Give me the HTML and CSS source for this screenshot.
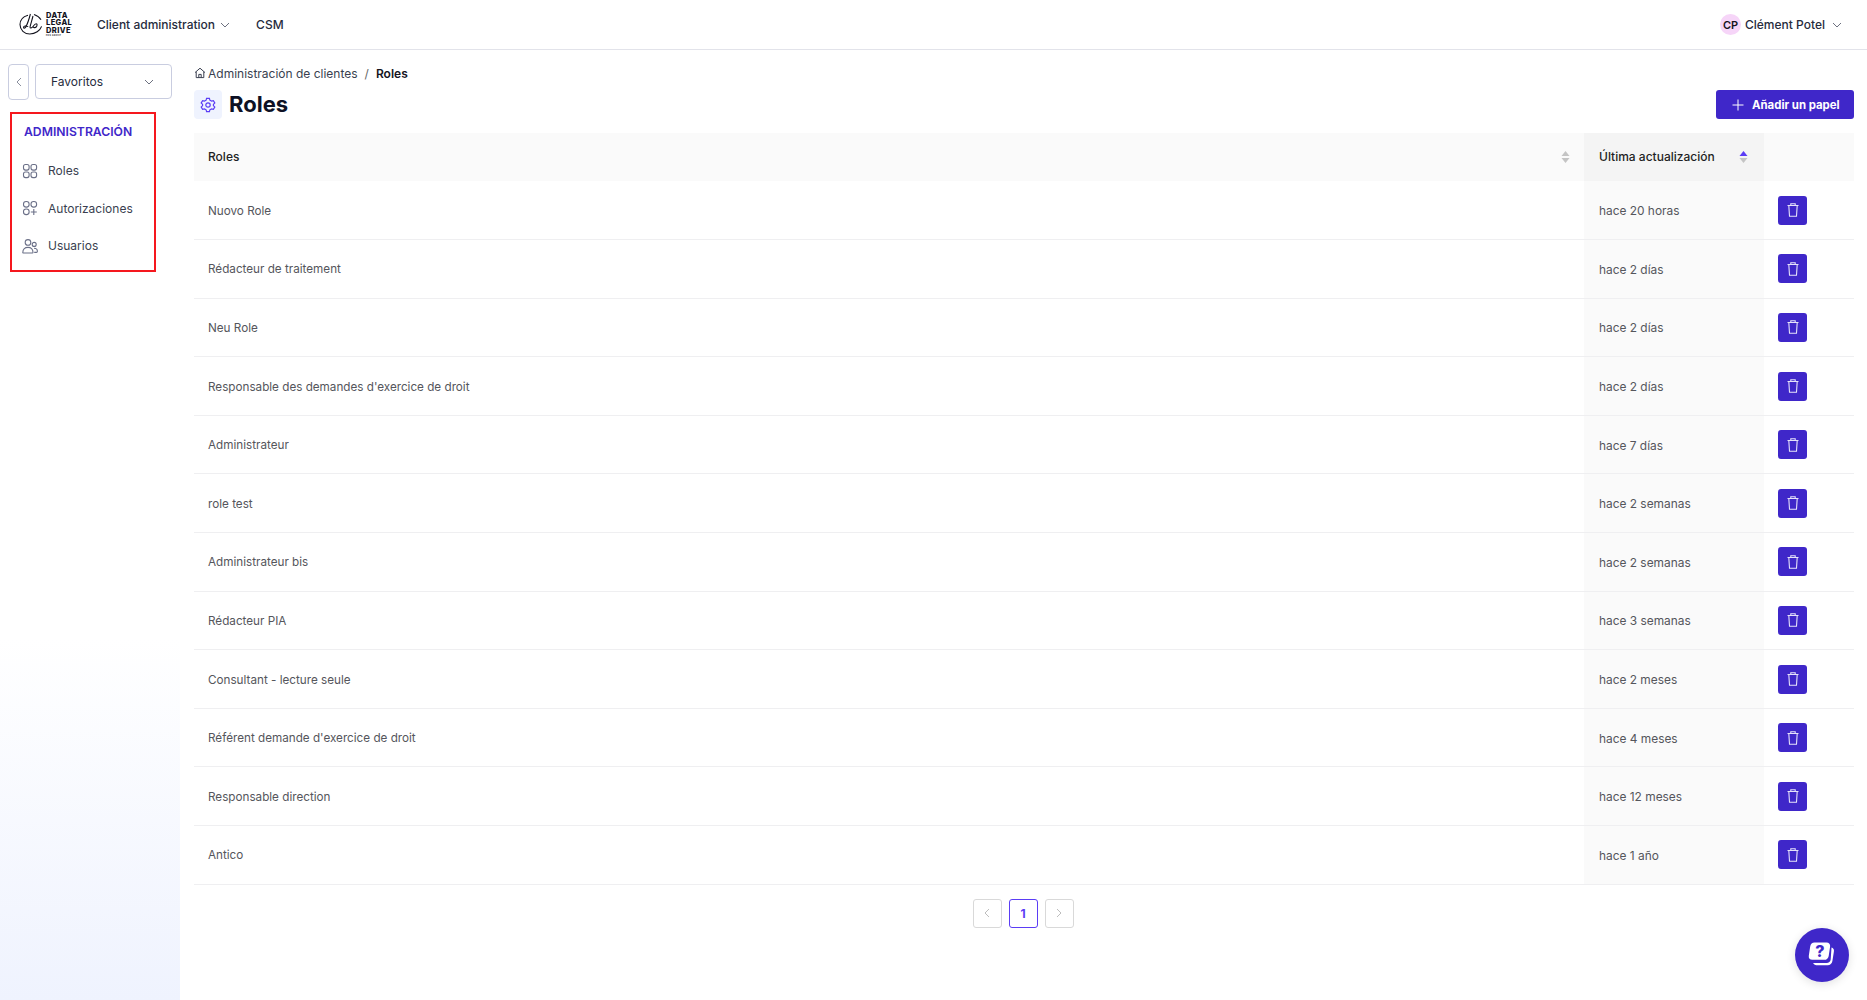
FILE: index.html
```html
<!DOCTYPE html>
<html lang="es">
<head>
    <meta charset="UTF-8">
    <title>Roles</title>
    <link rel="stylesheet" href="styles.css">
</head>
<body>
    <!-- Top bar -->
    <header class="topbar">
        <div class="logo">
            <svg class="logo-mark" width="24" height="24" viewBox="0 0 24 24" fill="none" stroke="#14141e" stroke-width="1.1">
                <path d="M9 2.200C4.600 3.400 1 6.800 1 11.600c0 5.400 4.400 9.400 9.800 9.400 5.600 0 10.200-3.400 11.800-7.600"/>
                <path d="M15 1.600c3 1 5.600 2.800 7 5.200"/>
                <path d="M11.400 1c-1.200 4.600-3 10-4.600 13-.8 1.600-2.400 1.400-2.200 0 .2-1.200 2.600-1.400 4.600-.6"/>
                <path d="M14 3c-1 4-2.400 8.200-3 11 0 1.400 1.400 1.200 2.400.2 1-1.200 2.400-3.400 3.800-3.400 1.200 0 1 2.200 0 3.200-1 1-2.600.8-2.800-.2"/>
            </svg>
            <div class="logo-text">
                <span>DATA</span>
                <span>LEGAL</span>
                <span>DRIVE</span>
                <small>EDS GROUP</small>
            </div>
        </div>
        <nav class="topnav">
            <a class="topnav-item">Client administration
                <svg class="chev" width="10" height="10" viewBox="0 0 10 10"><path d="M1 3l4 4 4-4"/></svg>
            </a>
            <a class="topnav-item">CSM</a>
        </nav>
        <div class="user">
            <span class="avatar">CP</span>
            <span>Clément Potel</span>
            <svg class="chev" width="10" height="10" viewBox="0 0 10 10"><path d="M1 3l4 4 4-4"/></svg>
        </div>
    </header>

    <div class="layout">
        <!-- Sidebar -->
        <aside class="sidebar">
            <div class="side-top">
                <button class="collapse">
                    <svg width="8" height="10" viewBox="0 0 8 10" fill="none" stroke="#8a8f9e"><path d="M6 1L2 5l4 4"/></svg>
                </button>
                <button class="favs">
                    <span>Favoritos</span>
                    <svg class="chev" width="10" height="10" viewBox="0 0 10 10"><path d="M1 3l4 4 4-4"/></svg>
                </button>
            </div>
            <div class="side-menu">
                <h3>ADMINISTRACIÓN</h3>
                <a class="side-item">
                    <svg width="16" height="16" viewBox="0 0 16 16" fill="none" stroke="#6b7088" stroke-width="1.1">
                        <rect x="1.500" y="1.500" width="5.600" height="5.600" rx="2"/>
                        <rect x="9" y="1.500" width="5.600" height="5.600" rx="2"/>
                        <rect x="1.500" y="9" width="5.600" height="5.600" rx="2"/>
                        <rect x="9" y="9" width="5.600" height="5.600" rx="2"/>
                    </svg>
                    Roles
                </a>
                <a class="side-item">
                    <svg width="16" height="16" viewBox="0 0 16 16" fill="none" stroke="#6b7088" stroke-width="1.1">
                        <rect x="1.500" y="1.500" width="5.600" height="5.600" rx="2.600"/>
                        <rect x="9" y="1.500" width="5.600" height="5.600" rx="2.600"/>
                        <rect x="1.500" y="9" width="5.600" height="5.600" rx="2.600"/>
                        <path d="M11.800 9v6M8.800 12h6"/>
                    </svg>
                    Autorizaciones
                </a>
                <a class="side-item">
                    <svg width="16" height="16" viewBox="0 0 16 16" fill="none" stroke="#6b7088" stroke-width="1.1">
                        <circle cx="6" cy="4.400" r="2.800"/>
                        <circle cx="12.200" cy="6.400" r="2"/>
                        <path d="M.8 14.400c0-3.600 2.200-5 5.200-5s5 1.600 5 5c0 .4-.2.6-.6.6H1.400c-.4 0-.6-.2-.6-.6z"/>
                        <path d="M12 10.200c2 0 3.400 1 3.400 3 0 .8-.4 1.200-1 1.200h-2.200"/>
                    </svg>
                    Usuarios
                </a>
            </div>
        </aside>

        <!-- Main content -->
        <main class="content">
            <div class="breadcrumb">
                <svg width="12" height="12" viewBox="0 0 12 12" fill="none" stroke="#3a3f50"><path d="M1 5.600L6 1.200l5 4.400M2.200 4.800v5.800h7.600V4.800M4.800 10.600V7.400h2.400v3.200"/></svg>
                <span class="crumb">Administración de clientes</span>
                <span class="crumb-sep">/</span>
                <b>Roles</b>
            </div>
            <div class="page-head">
                <div class="page-title">
                    <span class="title-icon">
                        <svg width="16" height="16" viewBox="0 0 16 16" fill="none" stroke="#5b3df5" stroke-width="1.200">
                            <path d="M6.600 1.300h2.800l.5 1.900 1.600.9 1.900-.5 1.400 2.400-1.400 1.400v1.200l1.400 1.400-1.400 2.400-1.900-.5-1.600.9-.5 1.900H6.600l-.5-1.900-1.600-.9-1.900.5L1.200 10l1.400-1.400V7.400L1.200 6l1.400-2.400 1.900.5 1.600-.9z"/>
                            <circle cx="8" cy="8" r="2.200"/>
                        </svg>
                    </span>
                    <h1>Roles</h1>
                </div>
                <button class="add-btn">
                    <svg width="12" height="12" viewBox="0 0 12 12" fill="none" stroke="#fff"><path d="M6 .5v11M.5 6h11"/></svg>
                    Añadir un papel
                </button>
            </div>

            <table class="roles">
                <thead>
                    <tr>
                        <th>
                            <div class="th-in">Roles
                                <svg width="9" height="14" viewBox="0 0 9 14"><path d="M4.500 1l4 5H.5z" fill="#c4c4c4"/><path d="M4.500 13l-4-5h8z" fill="#c4c4c4"/></svg>
                            </div>
                        </th>
                        <th class="col-date">
                            <div class="th-in">Última actualización
                                <svg width="9" height="14" viewBox="0 0 9 14"><path d="M4.500 1l4 5H.5z" fill="#5b3df5"/><path d="M4.500 13l-4-5h8z" fill="#c4c4c4"/></svg>
                            </div>
                        </th>
                        <th class="col-act"></th>
                    </tr>
                </thead>
                <tbody id="rows"></tbody>
            </table>

            <div class="pager">
                <button class="page-btn">
                    <svg width="8" height="10" viewBox="0 0 8 10" fill="none" stroke="#bdbdbd"><path d="M6 1L2 5l4 4"/></svg>
                </button>
                <button class="page-btn current">1</button>
                <button class="page-btn">
                    <svg width="8" height="10" viewBox="0 0 8 10" fill="none" stroke="#bdbdbd"><path d="M2 1l4 4-4 4"/></svg>
                </button>
            </div>
        </main>
    </div>

    <button class="help">
        <svg width="30" height="30" viewBox="0 0 30 30">
            <path d="M24.500 7.500c1.800.6 2.800 2 2.400 4l-1.500 9.500c-.4 2.600-2.200 4.200-4.800 4.200H9.500c-1.700 0-2.800-.8-3.300-2.200h13.400c2.200 0 3.800-1.300 4.100-3.500z" fill="#fff"/>
            <path d="M7.500 2.500h12c2.500 0 4 1.700 3.600 4.100l-1.400 9.300c-.4 2.400-2 3.900-4.400 3.900h-12c-2.400 0-3.900-1.700-3.500-4.100l1.400-9.300C3.600 4 5.200 2.500 7.500 2.500z" fill="#fff"/>
            <text x="13" y="17" class="help-q">?</text>
        </svg>
    </button>

    <script>
        let roles = [
            ["Nuovo Role", "hace 20 horas"],
            ["Rédacteur de traitement", "hace 2 días"],
            ["Neu Role", "hace 2 días"],
            ["Responsable des demandes d'exercice de droit", "hace 2 días"],
            ["Administrateur", "hace 7 días"],
            ["role test", "hace 2 semanas"],
            ["Administrateur bis", "hace 2 semanas"],
            ["Rédacteur PIA", "hace 3 semanas"],
            ["Consultant - lecture seule", "hace 2 meses"],
            ["Référent demande d'exercice de droit", "hace 4 meses"],
            ["Responsable direction", "hace 12 meses"],
            ["Antico", "hace 1 año"]
        ];

        let trash = '<svg width="16" height="16" viewBox="0 0 16 16" fill="none" stroke="#e6e3fa" stroke-width="1.100"><path d="M2.500 3.500h11M5.800 3.500V1.700h4.400v1.800M3.800 3.500l.7 10.800h7l.7-10.800"/></svg>';

        document.getElementById("rows").innerHTML = roles.map(function (r) {
            return `<tr><td>${r[0]}</td><td class="col-date">${r[1]}</td><td class="col-act"><button class="del">${trash}</button></td></tr>`;
        }).join("");
    </script>
</body>
</html>
```

FILE: styles.css
```css
/* Global */
* {
    box-sizing: border-box;
}

html, body {
    height: 100%;
}

body {
    margin: 0;
    font-family: "Inter", "Liberation Sans", sans-serif;
    font-size: 12px;
    color: #262b3d;
    background: #fff;
    overflow: hidden;
}

button {
    font-family: inherit;
    cursor: pointer;
}

.chev {
    fill: none;
    stroke: #5c6172;
    stroke-width: 0.9;
}

/* Top bar */
.topbar {
    display: flex;
    align-items: center;
    height: 50px;
    padding: 0 25px 0 19px;
    border-bottom: 1px solid #e2e3ea;
}

.logo {
    display: flex;
    align-items: center;
    gap: 3px;
    width: 78px;
}

.logo-text {
    display: flex;
    flex-direction: column;
    font-size: 7.500px;
    font-weight: 800;
    line-height: 7.500px;
    color: #14141e;
    letter-spacing: 0.4px;
}

.logo-text small {
    font-size: 2px;
    line-height: 3px;
    font-weight: 700;
}

.topnav {
    display: flex;
    align-items: center;
    gap: 26px;
}

.topnav-item {
    display: flex;
    align-items: center;
    gap: 5px;
    font-weight: 500;
}

.user {
    display: flex;
    align-items: center;
    gap: 4px;
    margin-left: auto;
    font-weight: 500;
}

.user .chev {
    margin-left: 3px;
}

.avatar {
    display: flex;
    align-items: center;
    justify-content: center;
    width: 21px;
    height: 21px;
    border-radius: 50%;
    background: #f6d5f8;
    color: #14141e;
    font-size: 11px;
    font-weight: 600;
}

/* Layout */
.layout {
    display: flex;
    height: 950px;
}

.sidebar {
    flex: 0 0 180px;
    padding: 14px 8px 0;
    background: linear-gradient(to bottom, #fff 62%, #eff3fe 100%);
}

.side-top {
    display: flex;
    gap: 6px;
}

.collapse {
    display: flex;
    align-items: center;
    justify-content: center;
    width: 21px;
    height: 36px;
    padding: 0;
    background: #fff;
    border: 1px solid #c9cde0;
    border-radius: 4px;
}

.favs {
    display: flex;
    align-items: center;
    justify-content: space-between;
    width: 137px;
    height: 35px;
    padding: 0 17px 0 15px;
    background: #fff;
    border: 1px solid #c9cde0;
    border-radius: 4px;
    color: #262b3d;
    font-size: 12px;
}

.side-menu {
    width: 146px;
    height: 160px;
    margin: 12px 0 0 2px;
    padding: 0 0 0 12px;
    border: 2px solid #f5181e;
}

.side-menu h3 {
    margin: 0 0 12px;
    padding-top: 10px;
    font-size: 12.200px;
    line-height: 16px;
    font-weight: 600;
    color: #3f27c9;
}

.side-item {
    display: flex;
    align-items: center;
    gap: 10px;
    height: 37.500px;
    margin-left: -2px;
    color: #3a3f50;
}

/* Main content */
.content {
    flex: 1;
    padding: 15px 13px 0 14px;
}

.breadcrumb {
    display: flex;
    align-items: center;
    height: 16px;
    color: #3a3f50;
}

.breadcrumb svg {
    margin-right: 2px;
}

.crumb-sep {
    margin: 0 7px;
    color: #666;
}

.breadcrumb b {
    font-weight: 600;
    color: #14141e;
}

.page-head {
    display: flex;
    align-items: center;
    justify-content: space-between;
    margin-top: 9px;
}

.page-title {
    display: flex;
    align-items: center;
    gap: 7px;
}

.title-icon {
    display: flex;
    align-items: center;
    justify-content: center;
    width: 28px;
    height: 29px;
    background: #eff3fe;
    border-radius: 4px;
}

.page-title h1 {
    margin: 0;
    font-size: 22px;
    line-height: 27px;
    font-weight: 700;
    color: #0d1124;
}

.add-btn {
    display: flex;
    align-items: center;
    gap: 8px;
    width: 138px;
    height: 29px;
    padding: 0 0 0 16px;
    background: #3f27c9;
    border: none;
    border-radius: 3px;
    color: #fff;
    font-size: 11.400px;
    font-weight: 700;
}

/* Table */
.roles {
    width: 100%;
    margin-top: 14px;
    border-collapse: collapse;
    table-layout: fixed;
}

.roles th {
    height: 48px;
    padding: 0 14px 1px;
    background: #fafafa;
    text-align: left;
    font-weight: 500;
    color: #1f1f24;
}

.roles th.col-date {
    padding-right: 16px;
    padding-left: 15px;
    background: #f4f4f4;
}

.th-in {
    display: flex;
    align-items: center;
    justify-content: space-between;
}

.roles td {
    height: 58.600px;
    padding: 1px 14px 0;
    border-bottom: 1px solid #efeff1;
    color: #55565c;
    font-size: 11.700px;
}

.roles .col-date {
    width: 180px;
}

.roles td.col-date {
    padding: 1px 16px 0 15px;
    background: #fafafa;
    font-size: 11.900px;
}

.roles .col-act {
    width: 90px;
}

.roles td.col-act {
    padding: 0 0 0 14px;
}

.del {
    display: flex;
    align-items: center;
    justify-content: center;
    width: 29px;
    height: 29px;
    padding: 0;
    background: #3f27c9;
    border: none;
    border-radius: 3px;
}

/* Pagination */
.pager {
    display: flex;
    justify-content: center;
    gap: 7px;
    margin-top: 14px;
    padding-right: 2px;
}

.page-btn {
    display: flex;
    align-items: center;
    justify-content: center;
    width: 29px;
    height: 29px;
    padding: 0;
    background: #fff;
    border: 1px solid #d9d9d9;
    border-radius: 3px;
    font-size: 12px;
    font-weight: 700;
}

.page-btn.current {
    border-color: #5b3df5;
    color: #5b3df5;
}

/* Help bubble */
.help {
    position: absolute;
    right: 18px;
    bottom: 18px;
    display: flex;
    align-items: center;
    justify-content: center;
    width: 54px;
    height: 54px;
    padding: 0;
    background: #3f27c9;
    border: none;
    border-radius: 50%;
    box-shadow: 0 2px 10px rgba(0, 0, 0, 0.12);
}

.help-q {
    font-family: "Inter", sans-serif;
    font-size: 16px;
    font-weight: 800;
    fill: #3f27c9;
    text-anchor: middle;
}
```
